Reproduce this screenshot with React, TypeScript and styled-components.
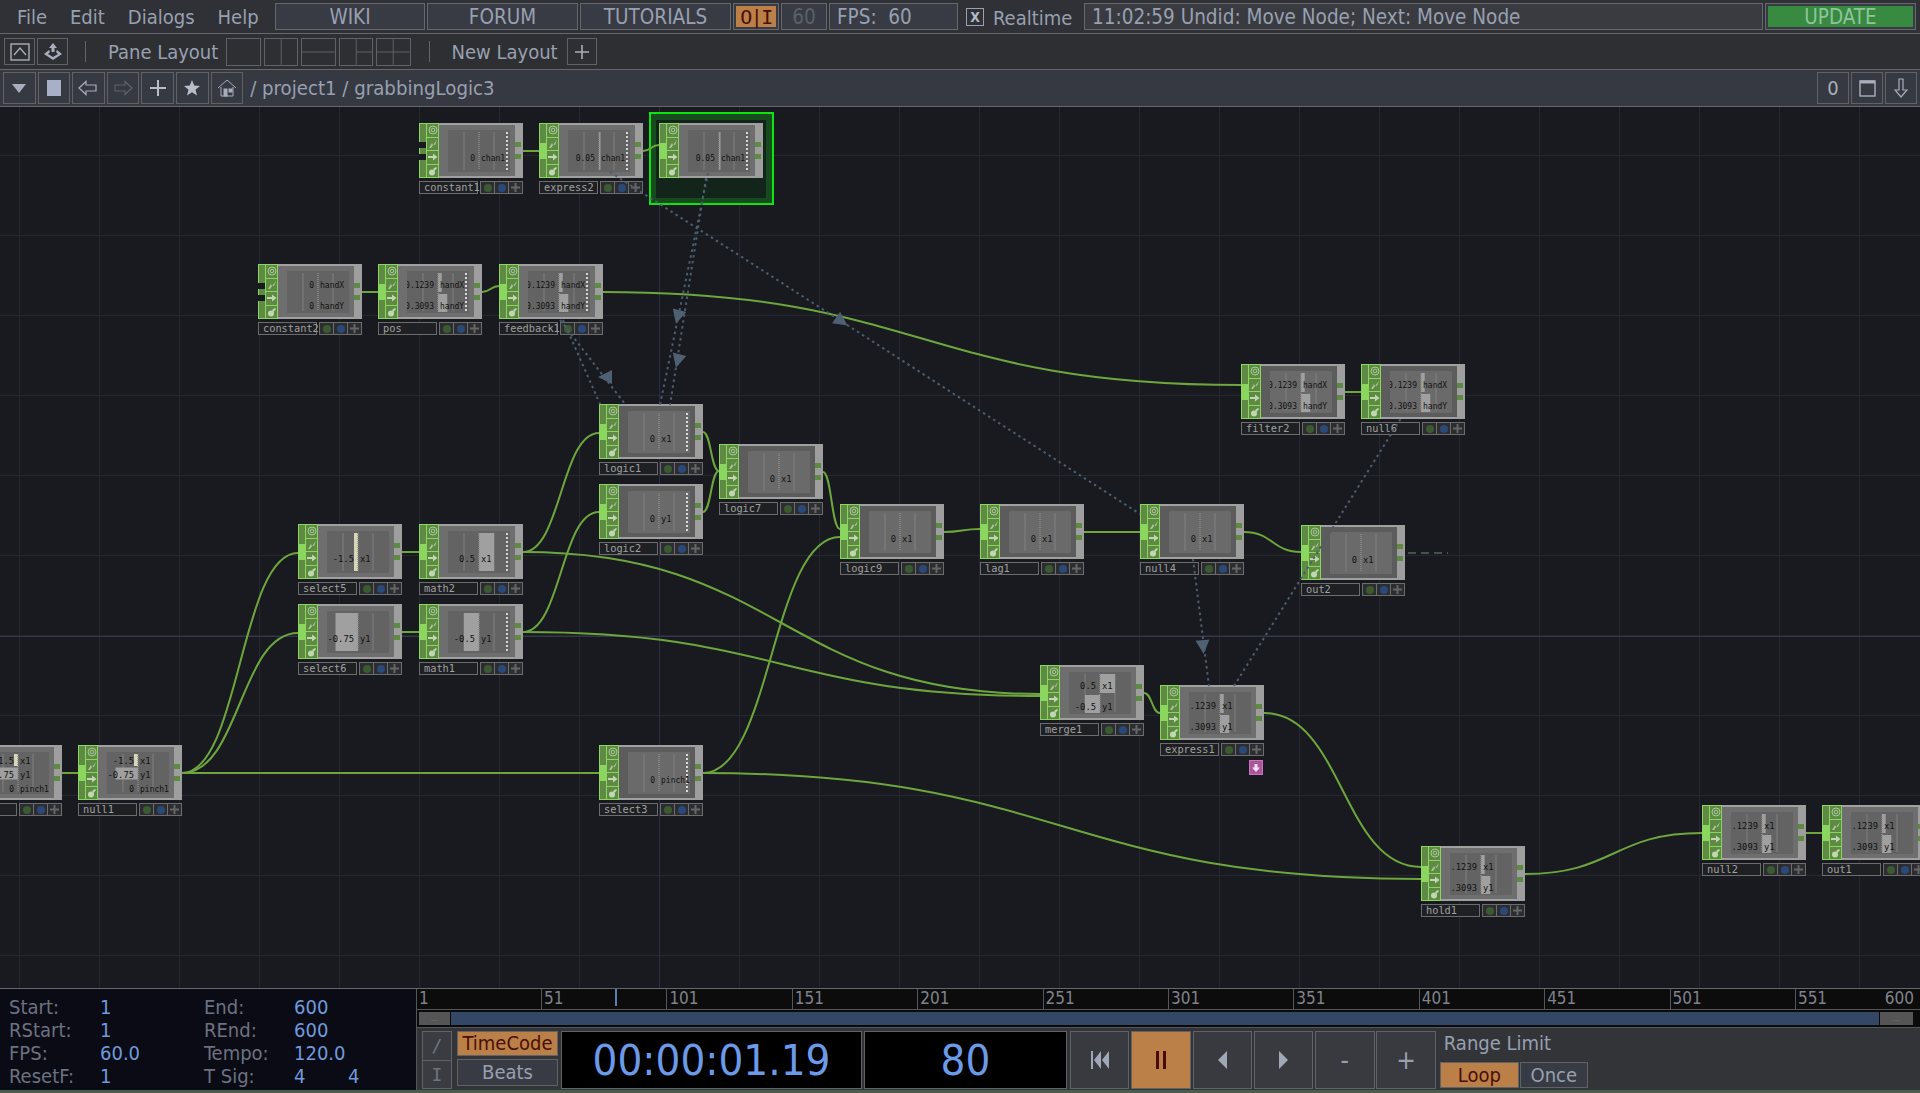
import React from 'react';
import styled, { createGlobalStyle } from 'styled-components';

const GlobalStyle = createGlobalStyle`
    html, body {
        margin: 0;
        padding: 0;
        height: 100%;
        overflow: hidden;
        background: #181a1f;
    }
    #root { height: 100%; }
`;

const UI = `"DejaVu Sans", "Liberation Sans", sans-serif`;
const MONO = `"DejaVu Sans Mono", "Liberation Mono", monospace`;

const Page = styled.div`
    width: 1920px;
    height: 1093px;
    display: flex;
    flex-direction: column;
    font-family: ${UI};
    font-stretch: condensed;
    color: #98a0b0;
    background: #4c5c4c;
`;

// Top bars
const MenuBar = styled.div`
    height: 34px;
    flex: none;
    box-sizing: border-box;
    display: flex;
    padding: 3px 4px 0 0;
    background: #303136;
    border-bottom: 1px solid #66676c;
`;

const Menu = styled.nav`
    width: 275px;
    flex: none;
    box-sizing: border-box;
    padding: 2px 0 0 17px;
    display: flex;
    gap: 23px;
    font-size: 20px;
`;

const Box = styled.div<{ $w?: number; $dim?: boolean; $ml?: number; $align?: string; $pl?: number }>`
    ${p => p.$w ? `width: ${p.$w}px; flex: none;` : 'flex: 1;'}
    height: 27px;
    box-sizing: border-box;
    margin-left: ${p => p.$ml ?? 0}px;
    padding-left: ${p => p.$pl ?? 0}px;
    display: flex;
    align-items: center;
    justify-content: ${p => p.$align ?? 'center'};
    background: #383b44;
    border: 1px solid #66686e;
    font-size: 20.5px;
    color: ${p => p.$dim ? '#5c6068' : '#98a0b0'};
`;

const Orange = styled.div`
    width: 100%;
    height: 100%;
    display: flex;
    align-items: center;
    justify-content: center;
    background: #bb7f48;
    color: #4a0f05;
    font-family: ${MONO};
    font-stretch: normal;
    font-size: 20px;
    letter-spacing: -1.5px;
`;

const ToggleOuter = styled(Box)`
    padding: 2px;
`;

const UpdateInner = styled.div`
    width: 100%;
    height: 100%;
    display: flex;
    align-items: center;
    justify-content: center;
    background: #378a40;
    color: #8ec49c;
`;

const CheckBox = styled.div`
    width: 18px;
    height: 18px;
    flex: none;
    margin: 5px 0 0 8px;
    box-sizing: border-box;
    border: 1px solid #9aa0ac;
    display: flex;
    align-items: center;
    justify-content: center;
    font-size: 14px;
    font-weight: bold;
    color: #b4bac8;
`;

const Realtime = styled.span`
    width: 79px;
    flex: none;
    margin: 3px 0 0 9px;
    font-size: 20px;
    white-space: nowrap;
`;

const Message = styled(Box)`
    white-space: nowrap;
    background: #3a3b40;
`;

const LayoutBar = styled.div`
    height: 36px;
    flex: none;
    box-sizing: border-box;
    display: flex;
    align-items: flex-start;
    padding: 4px 0 0 4px;
    background: #2e2f33;
    border-bottom: 1px solid #66676c;
`;

const ToolButton = styled.button<{ $w: number; $h?: number; $ml?: number }>`
    width: ${p => p.$w}px;
    height: ${p => p.$h ?? 27}px;
    flex: none;
    box-sizing: border-box;
    margin: 0 0 0 ${p => p.$ml ?? 0}px;
    padding: 0;
    display: flex;
    align-items: center;
    justify-content: center;
    background: transparent;
    border: 1px solid #606268;
    color: #a8aebc;
    font: inherit;
    font-size: 20px;
`;

const Separator = styled.i<{ $ml: number }>`
    width: 1px;
    height: 21px;
    flex: none;
    margin: 3px 0 0 ${p => p.$ml}px;
    background: #63656b;
`;

const BarLabel = styled.span<{ $ml: number; $w: number }>`
    width: ${p => p.$w}px;
    flex: none;
    margin: 2px 0 0 ${p => p.$ml}px;
    font-size: 20px;
    white-space: nowrap;
`;

const PaneGroup = styled.div`
    margin-left: 8px;
    display: flex;
    gap: 3px;
`;

const PathBar = styled.div`
    height: 37px;
    flex: none;
    box-sizing: border-box;
    display: flex;
    gap: 2px;
    padding: 2px 3px 0 3px;
    background: #363942;
    border-bottom: 1px solid #66676c;
`;

const PathText = styled.div`
    flex: 1;
    margin: 4px 0 0 5px;
    font-size: 20.2px;
    white-space: nowrap;
`;

// Network canvas
const Canvas = styled.div`
    position: relative;
    flex: 1;
    overflow: hidden;
    background-color: #181a1f;
    background-image:
        linear-gradient(to right, #262830 1px, transparent 1px),
        linear-gradient(to bottom, #262830 1px, transparent 1px);
    background-size: 80px 80px;
    background-position: 19px 48px;
`;

const OriginH = styled.div`
    position: absolute;
    left: 0;
    right: 0;
    top: 529px;
    height: 1px;
    background: #353750;
`;

const OriginV = styled.div`
    position: absolute;
    top: 0;
    bottom: 0;
    left: 659px;
    width: 1px;
    background: #2c2e48;
`;

const WireLayer = styled.svg`
    position: absolute;
    left: 0;
    top: 0;
    width: 1920px;
    height: 881px;
    z-index: 3;
    pointer-events: none;
`;

const NodeBox = styled.div<{ $x: number; $y: number }>`
    position: absolute;
    left: ${p => p.$x}px;
    top: ${p => p.$y - 107}px;
    width: 104px;
    z-index: 2;
`;

const Selection = styled.div`
    position: absolute;
    left: -10px;
    top: -11px;
    width: 125px;
    height: 93px;
    box-sizing: border-box;
    border: 2px solid #12e012;
    background: #164c1d;

    &::after {
        content: '';
        position: absolute;
        left: 5px;
        top: 6px;
        right: 6px;
        bottom: 5px;
        background: #13241a;
    }
`;

const NodeMain = styled.div`
    position: relative;
    height: 55px;
    display: flex;
`;

const Strip = styled.div`
    width: 20px;
    flex: none;
    display: flex;
    box-sizing: border-box;
    border: 1px solid #8ad65e;
    background: #8ad65e;
    gap: 1px;
`;

const InputCol = styled.div`
    width: 6px;
    flex: none;
    display: flex;
    flex-direction: column;
`;

const InSegment = styled.i<{ $h?: number; $kind: 'dark' | 'hot' | 'gap' }>`
    ${p => p.$h ? `height: ${p.$h}px; flex: none;` : 'flex: 1;'}
    background: ${p => p.$kind === 'dark' ? '#5e8a44' : p.$kind === 'hot' ? '#8ad65e' : '#181a1f'};
    ${p => p.$kind === 'gap' ? 'margin-left: -1px;' : ''}
`;

const ButtonCol = styled.div`
    flex: 1;
    display: flex;
    flex-direction: column;
    gap: 1px;
`;

const NodeIcon = styled.div`
    flex: 1;
    display: flex;
    align-items: center;
    justify-content: center;
    background: #5e8a44;
`;

const NodeBody = styled.div<{ $flip?: boolean }>`
    flex: 1;
    box-sizing: border-box;
    border-top: 2px solid #a0a0a0;
    border-bottom: 2px solid #a0a0a0;
    padding: 5px 5px 4px 9px;
    background: ${p => p.$flip ? '#5c5c5c' : '#6e6e6e'};
`;

const Viewer = styled.div<{ $flip?: boolean }>`
    position: relative;
    height: 42px;
    overflow: hidden;
    background: ${p => p.$flip ? '#6a6a6a' : '#636363'};
`;

const Chart = styled.svg`
    display: block;
    width: 62px;
    height: 42px;
`;

const Channel = styled.div<{ $center: number; $big: boolean }>`
    position: absolute;
    left: 0;
    top: ${p => p.$center - 6}px;
    height: 12px;
    display: flex;
    align-items: center;
    font-family: ${MONO};
    font-stretch: normal;
    font-size: ${p => p.$big ? 8.8 : 8}px;
    color: #121212;
    white-space: nowrap;
`;

const ChanValue = styled.span`
    width: 27px;
    display: flex;
    justify-content: flex-end;
`;

const ChanName = styled.span`
    margin-left: 6px;
`;

const OutStrip = styled.div`
    width: 8px;
    flex: none;
    box-sizing: border-box;
    padding-top: 19px;
    display: flex;
    flex-direction: column;
    gap: 7px;
    background: #9e9e9e;
`;

const OutPort = styled.i`
    width: 6px;
    height: 5px;
    background: #5e8a44;
`;

const NodeFoot = styled.div`
    margin-top: 3px;
    height: 13px;
    display: flex;
    justify-content: space-between;
`;

const NodeName = styled.div`
    width: 59px;
    box-sizing: border-box;
    padding-left: 4px;
    line-height: 11px;
    border: 1px solid #6c6c6c;
    background: #1f2024;
    font-family: ${MONO};
    font-stretch: normal;
    font-size: 10.3px;
    color: #a0a0a0;
    white-space: nowrap;
`;

const FootButtons = styled.div`
    width: 43px;
    box-sizing: border-box;
    border: 1px solid #6c6c6c;
    display: flex;
    gap: 1px;
    background: #6c6c6c;
`;

const FootButton = styled.div`
    flex: 1;
    display: flex;
    align-items: center;
    justify-content: center;
    background: #2c2d30;
`;

const Dot = styled.i<{ $c: string }>`
    width: 8px;
    height: 8px;
    border-radius: 50%;
    background: ${p => p.$c};
`;

const Cross = styled.svg`
    width: 9px;
    height: 9px;
`;

const PinkBadge = styled.div`
    position: absolute;
    left: 1249px;
    top: 653px;
    width: 14px;
    height: 15px;
    box-sizing: border-box;
    border: 1px solid #d070c0;
    background: #a8559a;
    display: flex;
    align-items: center;
    justify-content: center;
    z-index: 4;
`;

// Bottom timeline
const Bottom = styled.div`
    height: 102px;
    flex: none;
    box-sizing: border-box;
    display: flex;
    border-top: 1px solid #66676c;
    background: #333438;
`;

const Info = styled.div`
    width: 417px;
    flex: none;
    box-sizing: border-box;
    padding: 6px 0 0 9px;
    display: grid;
    grid-template-columns: 91px 104px 90px 54px 1fr;
    grid-auto-rows: 23px;
    align-items: center;
    background: #0b0b15;
    border-right: 1px solid #55565c;
    font-size: 20px;
    color: #6c7280;
`;

const Val = styled.span`
    color: #6f9adc;
`;

const Timeline = styled.div`
    flex: 1;
    min-width: 0;
    display: flex;
    flex-direction: column;
`;

const Ruler = styled.div`
    position: relative;
    height: 20px;
    flex: none;
    display: flex;
    background: #0c0c0c;
    border-bottom: 1px solid #55565c;
    font-size: 17px;
    line-height: 18px;
    color: #80838c;
`;

const RulerCell = styled.div<{ $first?: boolean; $last?: boolean }>`
    ${p => p.$last ? 'flex: 1; display: flex; justify-content: space-between; padding-right: 6px;' : `width: ${p.$first ? 124 : 125.4}px; flex: none;`}
    box-sizing: border-box;
    padding-left: 2px;
    border-left: ${p => p.$first ? '0' : '1px solid #55565c'};
`;

const Playhead = styled.i`
    position: absolute;
    left: 198px;
    top: 0;
    width: 2px;
    height: 17px;
    background: #5a7ab8;
`;

const RangeRow = styled.div`
    height: 17px;
    flex: none;
    box-sizing: border-box;
    padding: 2px 7px 2px 2px;
    display: flex;
    gap: 1px;
    background: #0b0b0b;
`;

const RangeHandle = styled.div<{ $w: number }>`
    width: ${p => p.$w}px;
    flex: none;
    display: flex;
    align-items: center;
    justify-content: center;
    background: #555;
    color: #777;
    font-size: 8px;
    line-height: 8px;
`;

const RangeFill = styled.div`
    flex: 1;
    background: #354766;
`;

const Controls = styled.div`
    flex: 1;
    display: flex;
    align-items: flex-start;
    padding: 3px 0 0 5px;
    border-top: 1px solid #55565c;
`;

const SlashCol = styled.div`
    width: 30px;
    height: 57px;
    flex: none;
    display: flex;
    flex-direction: column;
`;

const SlashBtn = styled.div`
    flex: 1;
    display: flex;
    align-items: center;
    justify-content: center;
    box-sizing: border-box;
    border: 1px solid #606268;
    margin-bottom: -1px;
    background: #3a3c42;
    font-family: ${MONO};
    font-stretch: normal;
    font-size: 18px;
    color: #70747c;
`;

const ModeCol = styled.div`
    width: 101px;
    flex: none;
    margin-left: 5px;
    display: flex;
    flex-direction: column;
    gap: 3px;
`;

const ModeBtn = styled.div<{ $on?: boolean; $h: number }>`
    height: ${p => p.$h}px;
    box-sizing: border-box;
    display: flex;
    align-items: center;
    justify-content: center;
    border: 1px solid #606268;
    padding: 0 1px 2px;
    background-clip: border-box;
    background-color: ${p => p.$on ? '#bb7f48' : '#383b44'};
    color: ${p => p.$on ? '#4a0f05' : '#98a0b0'};
    font-size: 20px;
`;

const Display = styled.div<{ $w: number; $ml: number }>`
    width: ${p => p.$w}px;
    height: 58px;
    flex: none;
    margin-left: ${p => p.$ml}px;
    box-sizing: border-box;
    display: flex;
    align-items: center;
    justify-content: center;
    background: #000;
    border: 1px solid #606268;
    font-size: 43.5px;
    color: #6b9ae8;
`;

const Transport = styled.div`
    margin-left: 3px;
    display: flex;
    gap: 1.9px;
`;

const TransportBtn = styled.div<{ $on?: boolean }>`
    width: 59.4px;
    height: 58px;
    flex: none;
    box-sizing: border-box;
    display: flex;
    align-items: center;
    justify-content: center;
    border: 1px solid #606268;
    background: ${p => p.$on ? '#bb7f48' : '#383a40'};
    color: #98a0b0;
    font-size: 26px;
`;

const RangeCol = styled.div`
    margin-left: 4px;
    display: flex;
    flex-direction: column;
`;

const RangeLabel = styled.div`
    height: 31px;
    padding: 0 0 0 4px;
    font-size: 20px;
    box-sizing: border-box;
    white-space: nowrap;
`;

const RangeBtns = styled.div`
    display: flex;
    gap: 1px;
`;

const RangeBtn = styled.div<{ $w: number; $on?: boolean }>`
    width: ${p => p.$w}px;
    height: 26px;
    box-sizing: border-box;
    display: flex;
    align-items: center;
    justify-content: center;
    border: 1px solid #606268;
    padding: 1px;
    background-color: ${p => p.$on ? '#bb7f48' : '#383b44'};
    color: ${p => p.$on ? '#4a0f05' : '#98a0b0'};
    font-size: 20px;
`;

const BottomEdge = styled.div`
    height: 3px;
    flex: none;
`;

// Data
type Chan = [string, string];
type Op = {
    id: string;
    label: string;
    x: number;
    y: number;
    chans: Chan[];
    dots?: boolean;
    noInput?: boolean;
    selected?: boolean;
    flip?: boolean;
};

const XY: Chan[] = [['.1239', 'x1'], ['.3093', 'y1']];
const HAND: Chan[] = [['0.1239', 'handX'], ['0.3093', 'handY']];
const PINCH: Chan[] = [['-1.5', 'x1'], ['-0.75', 'y1'], ['0', 'pinch1']];

const ops: Op[] = [
    { id: 'constant1', label: 'constant1', x: 419, y: 123, chans: [['0', 'chan1']], dots: true, noInput: true },
    { id: 'express2', label: 'express2', x: 539, y: 123, chans: [['0.05', 'chan1']], dots: true },
    { id: 'feedback2', label: 'feedback2', x: 659, y: 123, chans: [['0.05', 'chan1']], dots: true, selected: true },
    { id: 'constant2', label: 'constant2', x: 258, y: 264, chans: [['0', 'handX'], ['0', 'handY']], noInput: true },
    { id: 'pos', label: 'pos', x: 378, y: 264, chans: HAND, dots: true },
    { id: 'feedback1', label: 'feedback1', x: 499, y: 264, chans: HAND, dots: true },
    { id: 'filter2', label: 'filter2', x: 1241, y: 364, chans: HAND, flip: true },
    { id: 'null6', label: 'null6', x: 1361, y: 364, chans: HAND, flip: true },
    { id: 'logic1', label: 'logic1', x: 599, y: 404, chans: [['0', 'x1']], dots: true, flip: true },
    { id: 'logic7', label: 'logic7', x: 719, y: 444, chans: [['0', 'x1']], flip: true },
    { id: 'logic2', label: 'logic2', x: 599, y: 484, chans: [['0', 'y1']], dots: true, flip: true },
    { id: 'logic9', label: 'logic9', x: 840, y: 504, chans: [['0', 'x1']], flip: true },
    { id: 'lag1', label: 'lag1', x: 980, y: 504, chans: [['0', 'x1']], flip: true },
    { id: 'null4', label: 'null4', x: 1140, y: 504, chans: [['0', 'x1']], flip: true },
    { id: 'out2', label: 'out2', x: 1301, y: 525, chans: [['0', 'x1']], flip: true },
    { id: 'select5', label: 'select5', x: 298, y: 524, chans: [['-1.5', 'x1']] },
    { id: 'math2', label: 'math2', x: 419, y: 524, chans: [['0.5', 'x1']], dots: true },
    { id: 'select6', label: 'select6', x: 298, y: 604, chans: [['-0.75', 'y1']] },
    { id: 'math1', label: 'math1', x: 419, y: 604, chans: [['-0.5', 'y1']], dots: true },
    { id: 'merge1', label: 'merge1', x: 1040, y: 665, chans: [['0.5', 'x1'], ['-0.5', 'y1']] },
    { id: 'express1', label: 'express1', x: 1160, y: 685, chans: XY },
    { id: 'select3', label: 'select3', x: 599, y: 745, chans: [['0', 'pinch1']], dots: true, flip: true },
    { id: 'null0', label: '', x: -42, y: 745, chans: PINCH },
    { id: 'null1', label: 'null1', x: 78, y: 745, chans: PINCH },
    { id: 'hold1', label: 'hold1', x: 1421, y: 846, chans: XY },
    { id: 'null2', label: 'null2', x: 1702, y: 805, chans: XY },
    { id: 'out1', label: 'out1', x: 1822, y: 805, chans: XY },
];

// from, to, height of the wire on the target's input strip
const links: [string, string, number?][] = [
    ['constant1', 'express2'], ['express2', 'feedback2', 22], ['constant2', 'pos'], ['pos', 'feedback1', 22],
    ['feedback1', 'filter2', 21], ['filter2', 'null6'], ['null0', 'null1'], ['null1', 'select5', 29],
    ['null1', 'select6', 29], ['null1', 'select3'], ['select5', 'math2'], ['select6', 'math1'],
    ['math2', 'logic1', 29], ['math1', 'logic2', 28], ['math2', 'merge1', 29], ['math1', 'merge1', 31],
    ['logic1', 'logic7', 27], ['logic2', 'logic7', 27], ['logic7', 'logic9', 25], ['select3', 'logic9', 33],
    ['logic9', 'lag1', 25], ['lag1', 'null4'], ['null4', 'out2', 27], ['merge1', 'express1'],
    ['express1', 'hold1', 21], ['select3', 'hold1', 33], ['hold1', 'null2'], ['null2', 'out1'],
];

const dashed = [
    'M708 173 L660 405',
    'M706 178 L670 405',
    'M610 172 L1140 514',
    'M563 320 L600 404',
    'M560 320 L625 404',
    'M1193 559 L1209 686',
    'M1234 686 L1403 415',
];

const arrows: [number, number, number][] = [
    [678, 316, 195],
    [678, 360, 195],
    [841, 321, 125],
    [606, 377, 270],
    [1203, 646, 175],
];

const wirePath = (a: Op, b: Op, inY = 28) => {
    const x1 = a.x + 104, y1 = a.y + 28, x2 = b.x, y2 = b.y + inY;
    const dx = Math.abs(x2 - x1) * 0.5;
    return `M${x1} ${y1} C${x1 + dx} ${y1} ${x2 - dx} ${y2} ${x2} ${y2}`;
};

const byId = (id: string) => ops.find(o => o.id === id) as Op;

// Drawings
const bands = (n: number, i: number): [number, number] => {
    if (n === 1) return [2, 38];
    if (n === 2) return i === 0 ? [2, 19] : [23, 18];
    return [2 + i * 13.5, 12];
};

const ChartView = ({ chans, dots }: { chans: Chan[]; dots?: boolean }) => (
    <Chart viewBox="0 0 62 42">
        <line x1="16" x2="16" y1="2" y2="40" stroke="#808080" strokeWidth="1" />
        <line x1="46" x2="46" y1="2" y2="40" stroke="#808080" strokeWidth="1" />
        {chans.map(([v], i) => {
            const num = parseFloat(v);
            if (!num) return null;
            const [top, h] = bands(chans.length, i);
            if (Math.abs(num) > 1) {
                return <rect key={i} x="27" y={top} width="4" height={h} fill="#d8d6b8" />;
            }
            const to = 31 + num * 30;
            return <rect key={i} x={Math.min(31, to)} y={top} width={Math.abs(to - 31)} height={h} fill="#a0a0a0" />;
        })}
        <line x1="31" x2="31" y1="2" y2="40" stroke="#8c8c8c" strokeWidth="1.5" strokeDasharray="1 1" />
        {dots && <line x1="59" x2="59" y1="2" y2="40" stroke="#fff" strokeWidth="1.5" strokeDasharray="2 2" />}
    </Chart>
);

const centers: Record<number, number[]> = { 1: [28], 2: [14, 35], 3: [9, 23, 37] };

const IconTarget = () => (
    <svg width="10" height="10" viewBox="0 0 10 10" fill="none" stroke="#a8c898">
        <circle cx="5" cy="5" r="4" />
        <circle cx="5" cy="5" r="1.8" />
    </svg>
);
const IconSlash = () => (
    <svg width="10" height="10" viewBox="0 0 10 10" fill="#a8c898">
        <path d="M1 9 L4 4 L5 6 L9 1 L7 6 L5.5 5.5 L3 9 Z" />
    </svg>
);
const IconArrow = () => (
    <svg width="10" height="10" viewBox="0 0 10 10" fill="#c0d8b0">
        <path d="M0 4 H5 V1.5 L9.5 5 L5 8.5 V6 H0 Z" />
    </svg>
);
const IconLock = () => (
    <svg width="10" height="10" viewBox="0 0 10 10" fill="#c0d8b0">
        <circle cx="4" cy="6.5" r="3" />
        <path d="M5 3 L8 1 L9 2 L6.5 5 Z" />
    </svg>
);

const Node = ({ op }: { op: Op }) => (
    <NodeBox $x={op.x} $y={op.y}>
        {op.selected && <Selection />}
        <NodeMain>
            <Strip>
                <InputCol>
                    {op.noInput ? (
                        <>
                            <InSegment $kind="dark" />
                            <InSegment $kind="gap" $h={6} />
                            <InSegment $kind="dark" $h={6} />
                            <InSegment $kind="gap" $h={6} />
                            <InSegment $kind="dark" />
                        </>
                    ) : (
                        <>
                            <InSegment $kind="dark" />
                            <InSegment $kind="hot" $h={16} />
                            <InSegment $kind="dark" />
                        </>
                    )}
                </InputCol>
                <ButtonCol>
                    <NodeIcon><IconTarget /></NodeIcon>
                    <NodeIcon><IconSlash /></NodeIcon>
                    <NodeIcon><IconArrow /></NodeIcon>
                    <NodeIcon><IconLock /></NodeIcon>
                </ButtonCol>
            </Strip>
            <NodeBody $flip={op.flip}>
                <Viewer $flip={op.flip}>
                    <ChartView chans={op.chans} dots={op.dots} />
                    {op.chans.map(([v, n], i) => (
                        <Channel key={n} $center={centers[op.chans.length][i]} $big={n.length < 3}>
                            <ChanValue>{v}</ChanValue>
                            <ChanName>{n}</ChanName>
                        </Channel>
                    ))}
                </Viewer>
            </NodeBody>
            <OutStrip>
                <OutPort />
                <OutPort />
            </OutStrip>
        </NodeMain>
        <NodeFoot>
            <NodeName>{op.label}</NodeName>
            <FootButtons>
                <FootButton><Dot $c="#3b5a30" /></FootButton>
                <FootButton><Dot $c="#2a4878" /></FootButton>
                <FootButton>
                    <Cross viewBox="0 0 9 9"><path d="M3.5 0h2v3.5H9v2H5.5V9h-2V5.5H0v-2h3.5z" fill="#666" /></Cross>
                </FootButton>
            </FootButtons>
        </NodeFoot>
    </NodeBox>
);

const ruler = ['51', '101', '151', '201', '251', '301', '351', '401', '451', '501'];

const App = () => (
    <Page>
        <GlobalStyle />
        <MenuBar>
            <Menu>
                <span>File</span>
                <span>Edit</span>
                <span>Dialogs</span>
                <span>Help</span>
            </Menu>
            <Box $w={150}>WIKI</Box>
            <Box $w={151} $ml={2}>FORUM</Box>
            <Box $w={151} $ml={2}>TUTORIALS</Box>
            <ToggleOuter $w={46} $ml={2}><Orange>O|I</Orange></ToggleOuter>
            <Box $w={46} $ml={2} $dim>60</Box>
            <Box $w={129} $ml={2} $align="flex-start" $pl={7}>FPS:&nbsp;&nbsp;60</Box>
            <CheckBox>X</CheckBox>
            <Realtime>Realtime</Realtime>
            <Message $ml={12} $align="flex-start" $pl={7}>11:02:59 Undid: Move Node; Next: Move Node</Message>
            <ToggleOuter $w={151} $ml={2}><UpdateInner>UPDATE</UpdateInner></ToggleOuter>
        </MenuBar>

        <LayoutBar>
            <ToolButton $w={31}>
                <svg width="20" height="18" viewBox="0 0 20 18" fill="none" stroke="#a8aebc" strokeWidth="1.4">
                    <rect x="1" y="1" width="18" height="16" />
                    <path d="M4 12 L10 5 L16 12" />
                </svg>
            </ToolButton>
            <ToolButton $w={31} $ml={2}>
                <svg width="22" height="20" viewBox="0 0 22 20" fill="#a8aebc">
                    <path d="M11 1 L15 6 H12.5 V10 H9.5 V6 H7 Z" />
                    <path d="M7 8 L2 12 L11 18 L20 12 L15 8 L14 10 L16 12 L11 15 L6 12 L8 10 Z" />
                </svg>
            </ToolButton>
            <Separator $ml={17} />
            <BarLabel $ml={22} $w={110}>Pane Layout</BarLabel>
            <PaneGroup>
                {[0, 1, 2, 3, 4].map(k => (
                    <ToolButton key={k} $w={34.5} $h={28}>
                        <svg width="33" height="26" viewBox="0 0 33 26" stroke="#606268" fill="none">
                            {k === 1 && <path d="M16.5 0 V26" />}
                            {k === 2 && <path d="M0 13 H33" />}
                            {k === 3 && <path d="M16.5 0 V26 M16.5 13 H33" />}
                            {k === 4 && <path d="M16.5 0 V26 M0 13 H33" />}
                        </svg>
                    </ToolButton>
                ))}
            </PaneGroup>
            <Separator $ml={18} />
            <BarLabel $ml={22} $w={105}>New Layout</BarLabel>
            <ToolButton $w={30} $ml={10}>
                <svg width="16" height="16" viewBox="0 0 16 16" stroke="#a8aebc" strokeWidth="1.6">
                    <path d="M8 1 V15 M1 8 H15" />
                </svg>
            </ToolButton>
        </LayoutBar>

        <PathBar>
            <ToolButton $w={32.6} $h={32}>
                <svg width="14" height="9" viewBox="0 0 14 9" fill="#a8aebc"><path d="M0 0 H14 L7 9 Z" /></svg>
            </ToolButton>
            <ToolButton $w={32.6} $h={32}>
                <svg width="14" height="16" viewBox="0 0 14 16" fill="#a8b0c8"><rect width="14" height="16" /></svg>
            </ToolButton>
            <ToolButton $w={32.6} $h={32}>
                <svg width="20" height="16" viewBox="0 0 20 16" fill="none" stroke="#a8aebc" strokeWidth="1.2">
                    <path d="M1 8 L8 1.5 V5 H18 V11 H8 V14.5 Z" />
                </svg>
            </ToolButton>
            <ToolButton $w={32.6} $h={32}>
                <svg width="20" height="16" viewBox="0 0 20 16" fill="none" stroke="#5c6068" strokeWidth="1.2">
                    <path d="M19 8 L12 1.5 V5 H2 V11 H12 V14.5 Z" />
                </svg>
            </ToolButton>
            <ToolButton $w={32.6} $h={32}>
                <svg width="18" height="18" viewBox="0 0 18 18" stroke="#b8bec8" strokeWidth="2"><path d="M9 1 V17 M1 9 H17" /></svg>
            </ToolButton>
            <ToolButton $w={32.6} $h={32}>
                <svg width="18" height="18" viewBox="0 0 18 18" fill="#b8bec8">
                    <path d="M9 1 L11.2 6.6 L17 7 L12.5 10.7 L14 16.5 L9 13.3 L4 16.5 L5.5 10.7 L1 7 L6.8 6.6 Z" />
                </svg>
            </ToolButton>
            <ToolButton $w={32.6} $h={32}>
                <svg width="20" height="20" viewBox="0 0 20 20" fill="none" stroke="#a8aebc">
                    <path d="M1 10 L10 2 L19 10 M4 9 V18 H16 V9" />
                    <rect x="7" y="11" width="3" height="7" fill="#a8aebc" />
                    <rect x="12" y="11" width="3" height="3" fill="#a8aebc" />
                </svg>
            </ToolButton>
            <PathText>/ project1 / grabbingLogic3</PathText>
            <ToolButton $w={32} $h={32}>0</ToolButton>
            <ToolButton $w={32} $h={32}>
                <svg width="17" height="17" viewBox="0 0 17 17" fill="none" stroke="#a8aebc" strokeWidth="1.4">
                    <rect x="1" y="1" width="15" height="15" />
                    <path d="M1 2 H16" strokeWidth="3" />
                </svg>
            </ToolButton>
            <ToolButton $w={32} $h={32}>
                <svg width="14" height="20" viewBox="0 0 14 20" fill="none" stroke="#a8aebc" strokeWidth="1.2">
                    <path d="M5 1 H9 V12 H13 L7 19 L1 12 H5 Z" />
                </svg>
            </ToolButton>
        </PathBar>

        <Canvas>
            <OriginH />
            <OriginV />
            {ops.map(op => <Node key={op.id} op={op} />)}
            <PinkBadge>
                <svg width="8" height="8" viewBox="0 0 8 8" fill="#f0e0f0"><path d="M2.5 0 H5.5 V3.5 H8 L4 8 L0 3.5 H2.5 Z" /></svg>
            </PinkBadge>
            <WireLayer viewBox="0 107 1920 881" fill="none">
                {links.map(([a, b, inY]) => (
                    <path key={a + b} d={wirePath(byId(a), byId(b), inY)} stroke="#6ea63e" strokeWidth="2" />
                ))}
                {dashed.map(d => (
                    <path key={d} d={d} stroke="#4c5d70" strokeWidth="2" strokeDasharray="2.5 3.5" />
                ))}
                <path d="M1408 553 H1448" stroke="#506a58" strokeWidth="1.5" strokeDasharray="8 5" />
                {arrows.map(([x, y, r]) => (
                    <path key={`${x}${y}`} d="M-7 -6 L7 -6 L0 8 Z" transform={`translate(${x} ${y}) rotate(${r - 180})`} fill="#4f6072" />
                ))}
            </WireLayer>
        </Canvas>

        <Bottom>
            <Info>
                <span>Start:</span><Val>1</Val><span>End:</span><Val>600</Val><span />
                <span>RStart:</span><Val>1</Val><span>REnd:</span><Val>600</Val><span />
                <span>FPS:</span><Val>60.0</Val><span>Tempo:</span><Val>120.0</Val><span />
                <span>ResetF:</span><Val>1</Val><span>T Sig:</span><Val>4</Val><Val>4</Val>
            </Info>
            <Timeline>
                <Ruler>
                    <RulerCell $first>1</RulerCell>
                    {ruler.map(r => <RulerCell key={r}>{r}</RulerCell>)}
                    <RulerCell $last><span>551</span><span>600</span></RulerCell>
                    <Playhead />
                </Ruler>
                <RangeRow>
                    <RangeHandle $w={31}>...</RangeHandle>
                    <RangeFill />
                    <RangeHandle $w={33}>...</RangeHandle>
                </RangeRow>
                <Controls>
                    <SlashCol>
                        <SlashBtn>/</SlashBtn>
                        <SlashBtn>I</SlashBtn>
                    </SlashCol>
                    <ModeCol>
                        <ModeBtn $on $h={25}>TimeCode</ModeBtn>
                        <ModeBtn $h={27}>Beats</ModeBtn>
                    </ModeCol>
                    <Display $w={301} $ml={3}>00:00:01.19</Display>
                    <Display $w={203} $ml={2}>80</Display>
                    <Transport>
                        <TransportBtn>
                            <svg width="18" height="18" viewBox="0 0 18 18" fill="#a0a8b8">
                                <rect x="0" y="0" width="2" height="18" />
                                <path d="M10 0 V18 L3 9 Z M18 0 V18 L11 9 Z" />
                            </svg>
                        </TransportBtn>
                        <TransportBtn $on>
                            <svg width="10" height="18" viewBox="0 0 10 18" fill="#4a0a05">
                                <rect x="0" y="0" width="3" height="18" />
                                <rect x="7" y="0" width="3" height="18" />
                            </svg>
                        </TransportBtn>
                        <TransportBtn>
                            <svg width="9" height="18" viewBox="0 0 9 18" fill="#a0a8b8"><path d="M9 0 V18 L0 9 Z" /></svg>
                        </TransportBtn>
                        <TransportBtn>
                            <svg width="9" height="18" viewBox="0 0 9 18" fill="#a0a8b8"><path d="M0 0 V18 L9 9 Z" /></svg>
                        </TransportBtn>
                        <TransportBtn>-</TransportBtn>
                        <TransportBtn>+</TransportBtn>
                    </Transport>
                    <RangeCol>
                        <RangeLabel>Range Limit</RangeLabel>
                        <RangeBtns>
                            <RangeBtn $on $w={79}>Loop</RangeBtn>
                            <RangeBtn $w={68}>Once</RangeBtn>
                        </RangeBtns>
                    </RangeCol>
                </Controls>
            </Timeline>
        </Bottom>
        <BottomEdge />
    </Page>
);

export default App;
